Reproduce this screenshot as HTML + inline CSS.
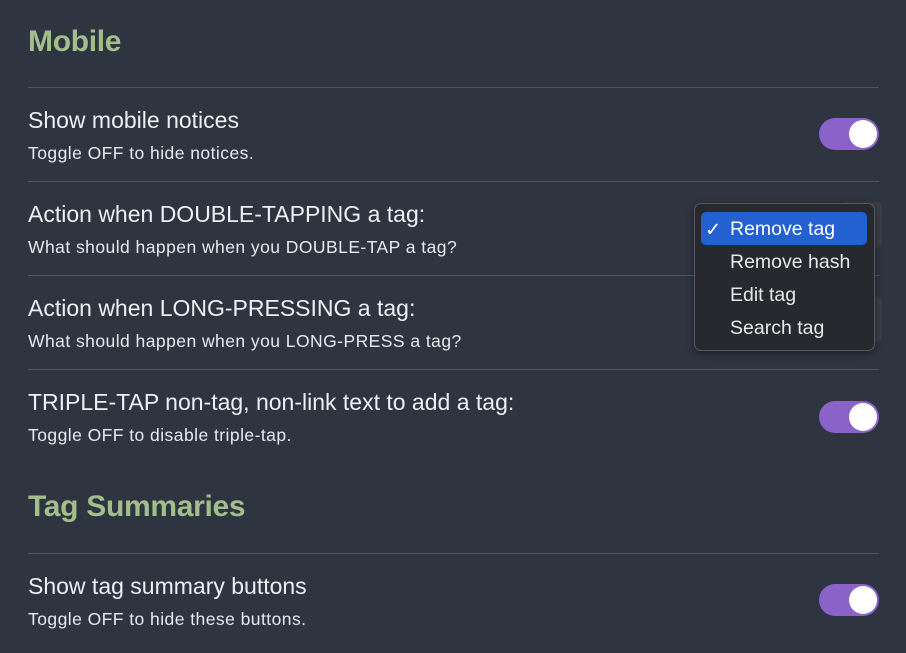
<!DOCTYPE html><html><head><style>
body{margin:0;width:906px;height:653px;background:#2e3440;font-family:"Liberation Sans",sans-serif;color:#eceff4;position:relative;overflow:hidden}
.a{position:absolute}
h2{position:absolute;margin:0;left:28px;font-size:30px;font-weight:bold;color:#a3be8c;letter-spacing:-0.3px}
.line{position:absolute;left:28px;width:851px;height:1px;background:#4c566a}
.t{position:absolute;left:28px;font-size:23px}
.d{position:absolute;left:28px;font-size:17.5px;letter-spacing:0.45px;color:#e5e9f0}
.tg{position:absolute;left:819px;width:60px;height:32px;border-radius:16px;background:#8a62c8}
.tg:after{content:"";position:absolute;right:2px;top:2px;width:28px;height:28px;border-radius:50%;background:#fff}
.sel{position:absolute;left:840px;width:42px;height:46px;border-radius:6px;background:#3b3f46}
.menu{position:absolute;left:694px;top:203px;width:179px;height:146px;background:#27292e;border:1px solid #55585e;border-radius:7px;box-shadow:0 2px 8px rgba(0,0,0,.4)}
.it{position:absolute;left:35px;font-size:19.5px;color:#e8e8e8}
</style></head><body>
<h2 style="top:25px">Mobile</h2>
<div class="line" style="top:87px"></div>
<div class="t" style="top:107px">Show mobile notices</div>
<div class="d" style="top:143px">Toggle OFF to hide notices.</div>
<div class="tg" style="top:118px"></div>
<div class="line" style="top:181px"></div>
<div class="t" style="top:201px">Action when DOUBLE-TAPPING a tag:</div>
<div class="d" style="top:237px">What should happen when you DOUBLE-TAP a tag?</div>
<div class="sel" style="top:202px"></div>
<div class="line" style="top:275px"></div>
<div class="t" style="top:295px">Action when LONG-PRESSING a tag:</div>
<div class="d" style="top:331px">What should happen when you LONG-PRESS a tag?</div>
<div class="sel" style="top:296px"></div>
<div class="line" style="top:369px"></div>
<div class="t" style="top:389px">TRIPLE-TAP non-tag, non-link text to add a tag:</div>
<div class="d" style="top:425px">Toggle OFF to disable triple-tap.</div>
<div class="tg" style="top:401px"></div>
<h2 style="top:490px">Tag Summaries</h2>
<div class="line" style="top:553px"></div>
<div class="t" style="top:573px">Show tag summary buttons</div>
<div class="d" style="top:609px">Toggle OFF to hide these buttons.</div>
<div class="tg" style="top:584px"></div>
<div class="menu">
<div class="a" style="left:6px;top:8px;width:166px;height:33px;border-radius:5px;background:#2361d0"></div>
<div class="it" style="left:10px;top:14px;color:#fff">✓</div>
<div class="it" style="top:14px;color:#fff">Remove tag</div>
<div class="it" style="top:47px">Remove hash</div>
<div class="it" style="top:80px">Edit tag</div>
<div class="it" style="top:113px">Search tag</div>
</div>
</body></html>
